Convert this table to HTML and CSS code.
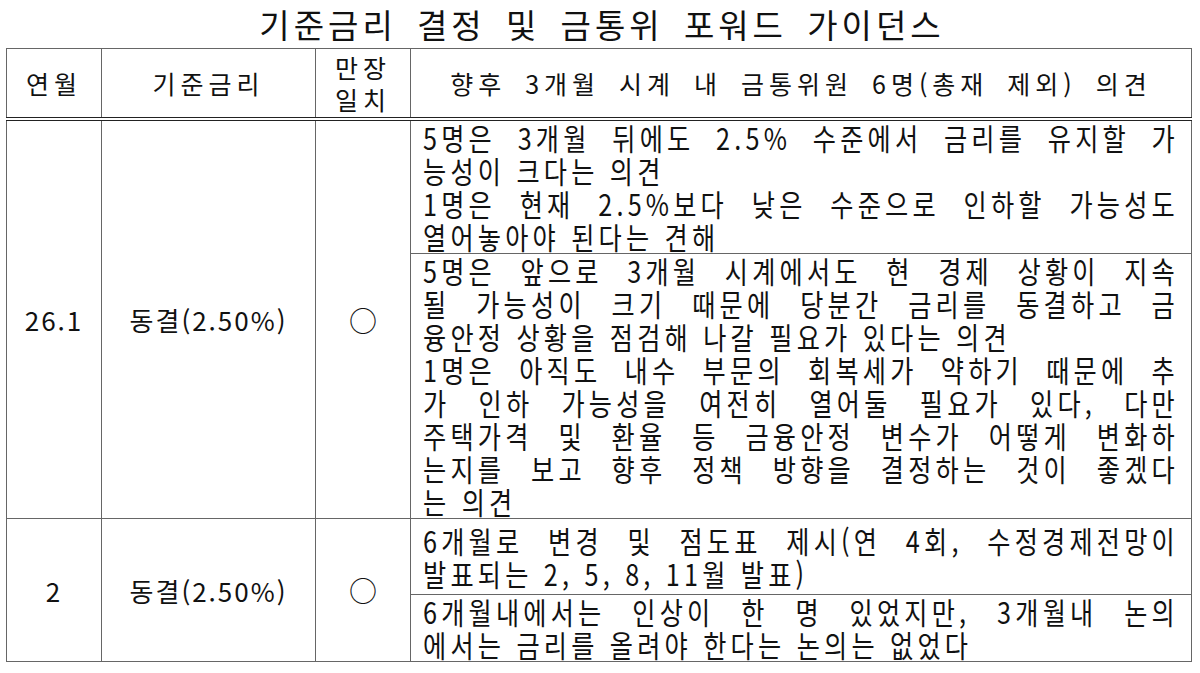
FILE: index.html
```html
<!DOCTYPE html>
<html lang="ko">
<head>
<meta charset="utf-8">
<title>기준금리 결정 및 금통위 포워드 가이던스</title>
<link rel="stylesheet" href="styles.css">
</head>
<body>
<h1 class="title">기준금리 결정 및 금통위 포워드 가이던스</h1>
<table class="grid">
  <colgroup><col class="c1"><col class="c2"><col class="c3"><col class="c4"></colgroup>
  <thead>
    <tr class="head">
      <th>연월</th>
      <th>기준금리</th>
      <th>만장<br>일치</th>
      <th>향후 3개월 시계 내 금통위원 6명(총재 제외) 의견</th>
    </tr>
  </thead>
  <tbody>
    <tr class="r1a">
      <td rowspan="2" class="ym">26.1</td>
      <td rowspan="2" class="rate">동결(2.50%)</td>
      <td rowspan="2" class="mark">○</td>
      <td class="op"><div class="txt">
        <span class="ln j">5명은 3개월 뒤에도 2.5% 수준에서 금리를 유지할 가</span>
        <span class="ln">능성이 크다는 의견</span>
        <span class="ln j">1명은 현재 2.5%보다 낮은 수준으로 인하할 가능성도</span>
        <span class="ln">열어놓아야 된다는 견해</span>
      </div></td>
    </tr>
    <tr class="r1b">
      <td class="op"><div class="txt">
        <span class="ln j">5명은 앞으로 3개월 시계에서도 현 경제 상황이 지속</span>
        <span class="ln j">될 가능성이 크기 때문에 당분간 금리를 동결하고 금</span>
        <span class="ln">융안정 상황을 점검해 나갈 필요가 있다는 의견</span>
        <span class="ln j">1명은 아직도 내수 부문의 회복세가 약하기 때문에 추</span>
        <span class="ln j">가 인하 가능성을 여전히 열어둘 필요가 있다, 다만</span>
        <span class="ln j">주택가격 및 환율 등 금융안정 변수가 어떻게 변화하</span>
        <span class="ln j">는지를 보고 향후 정책 방향을 결정하는 것이 좋겠다</span>
        <span class="ln">는 의견</span>
      </div></td>
    </tr>
    <tr class="r2a">
      <td rowspan="2" class="ym">2</td>
      <td rowspan="2" class="rate">동결(2.50%)</td>
      <td rowspan="2" class="mark">○</td>
      <td class="op"><div class="txt">
        <span class="ln j">6개월로 변경 및 점도표 제시(연 4회, 수정경제전망이</span>
        <span class="ln">발표되는 2, 5, 8, 11월 발표)</span>
      </div></td>
    </tr>
    <tr class="r2b">
      <td class="op"><div class="txt">
        <span class="ln j">6개월내에서는 인상이 한 명 있었지만, 3개월내 논의</span>
        <span class="ln">에서는 금리를 올려야 한다는 논의는 없었다</span>
      </div></td>
    </tr>
  </tbody>
</table>
</body>
</html>
```

FILE: styles.css
```css
html, body {
  margin: 0;
  padding: 0;
  background: #fff;
}

body {
  font-family: "Noto Sans CJK KR", "Noto Sans", sans-serif;
  color: #111;
}

.title {
  margin: 0;
  height: 48px;
  box-sizing: border-box;
  padding-top: 2px;
  padding-left: 4px;
  line-height: 44px;
  font-size: 33px;
  font-weight: 400;
  letter-spacing: 4px;
  word-spacing: 7px;
  text-align: center;
}

.grid {
  margin-left: 6px;
  width: 1185px;
  table-layout: fixed;
  border-collapse: collapse;
  border: 1px solid #333;
}

.c1 { width: 95px; }
.c2 { width: 214px; }
.c3 { width: 95px; }
.c4 { width: 781px; }

th, td {
  border: 1px solid #666;
  padding: 0;
  text-align: center;
  vertical-align: middle;
  font-weight: 400;
}

.head th {
  height: 68px;
  font-size: 25px;
  letter-spacing: 5px;
  word-spacing: 7px;
  line-height: 32px;
  border-bottom: 4px double #222;
}

td.ym,
td.rate {
  font-size: 26px;
  letter-spacing: 2px;
}

td.mark {
  font-size: 28px;
}

td.op {
  text-align: left;
  padding: 0 12px 0 12px;
}

.r1a td.op { height: 132px; }
.r1b td.op { height: 263px; }
.r2a td.op { height: 75px; }
.r2b td.op { height: 65px; }

.txt {
  width: calc(100% / 0.84);
  transform: scaleX(0.84);
  transform-origin: 0 0;
  font-size: 30px;
  letter-spacing: 5px;
  line-height: 33px;
}

.ln {
  display: block;
  text-align: left;
  white-space: nowrap;
}

.ln.j {
  text-align: justify;
  text-align-last: justify;
  white-space: normal;
}
```
